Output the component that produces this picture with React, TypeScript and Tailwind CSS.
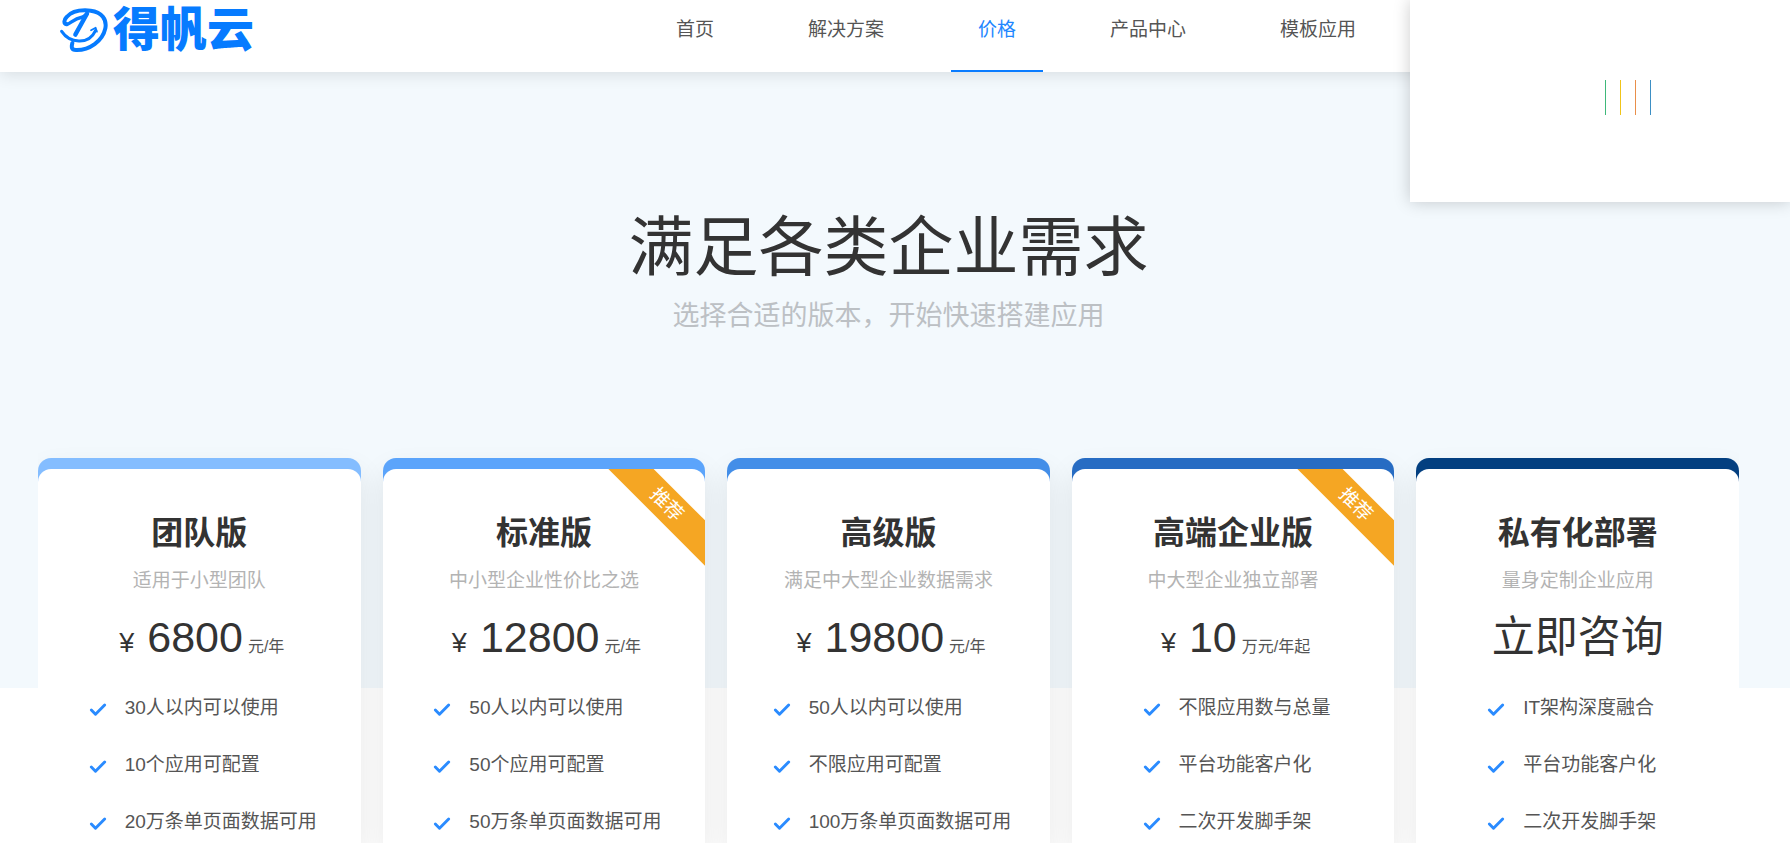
import React from "react";
import { Check } from "lucide-react";

type Plan = {
  name: string;
  desc: string;
  price?: string;
  unit?: string;
  recommended?: boolean;
  color: string;
  features: string[];
};

const navItems = ["首页", "解决方案", "价格", "产品中心", "模板应用"];

const plans: Plan[] = [
  {
    name: "团队版",
    desc: "适用于小型团队",
    price: "6800",
    unit: "元/年",
    color: "bg-[#84bdff]",
    features: ["30人以内可以使用", "10个应用可配置", "20万条单页面数据可用"],
  },
  {
    name: "标准版",
    desc: "中小型企业性价比之选",
    price: "12800",
    unit: "元/年",
    recommended: true,
    color: "bg-[#5ba4fb]",
    features: ["50人以内可以使用", "50个应用可配置", "50万条单页面数据可用"],
  },
  {
    name: "高级版",
    desc: "满足中大型企业数据需求",
    price: "19800",
    unit: "元/年",
    color: "bg-[#438ee8]",
    features: ["50人以内可以使用", "不限应用可配置", "100万条单页面数据可用"],
  },
  {
    name: "高端企业版",
    desc: "中大型企业独立部署",
    price: "10",
    unit: "万元/年起",
    recommended: true,
    color: "bg-[#276cc3]",
    features: ["不限应用数与总量", "平台功能客户化", "二次开发脚手架"],
  },
  {
    name: "私有化部署",
    desc: "量身定制企业应用",
    color: "bg-[#033f80]",
    features: ["IT架构深度融合", "平台功能客户化", "二次开发脚手架"],
  },
];

const loaderBars = [
  "bg-[#3fb87a]",
  "bg-[#f0c419]",
  "bg-[#e98f4a]",
  "bg-[#3d8fc4]",
];

function Logo() {
  return (
    <a href="#" className="flex items-center gap-[5px] text-[#067bff]">
      <svg
        width="48"
        height="46"
        viewBox="60 18 144 138"
        fill="none"
        stroke="currentColor"
        strokeLinecap="round"
        strokeLinejoin="round"
        aria-hidden="true"
      >
        <path
          d="M80 70C70 68 72 56 80 48C94 32 122 26 152 29C186 33 201 56 196 82C188 120 148 148 108 147C94 147 94 138 97 126"
          strokeWidth="12"
        />
        <path d="M80 70C92 68 98 54 128 48L142 38" strokeWidth="10" />
        <path d="M141 38L106 101" strokeWidth="13" />
        <path d="M65 91C88 126 146 134 167 88" strokeWidth="9" />
        <path d="M153 88L167 80L171 92" strokeWidth="5" />
      </svg>
      <span className="text-[47px] leading-[48px] font-black">得帆云</span>
    </a>
  );
}

function Header() {
  return (
    <header className="relative z-10 flex h-[72px] items-start bg-white pl-[60px] shadow-[0_2px_16px_rgba(0,0,0,0.12)]">
      <div className="w-[589px] shrink-0 pt-[6px]">
        <Logo />
      </div>
      <nav className="flex h-full gap-10">
        {navItems.map((item) => (
          <a
            key={item}
            href="#"
            className={
              item === "价格"
                ? "border-b-2 border-[#0a7cff] px-[27px] pt-4 text-[19px] leading-7 text-[#1f87ff]"
                : "px-[27px] pt-4 text-[19px] leading-7 text-[#555]"
            }
          >
            {item}
          </a>
        ))}
      </nav>
    </header>
  );
}

function LoadingPanel() {
  return (
    <div className="absolute top-0 right-0 z-20 flex h-[202px] w-[380px] justify-center gap-[14px] bg-white pt-20 pl-[56px] shadow-[0_0_16px_rgba(0,0,0,0.2)]">
      {loaderBars.map((bar) => (
        <span key={bar} className={`h-[35px] w-px ${bar}`} />
      ))}
    </div>
  );
}

function PlanCard({ plan }: { plan: Plan }) {
  return (
    <article
      className={`flex min-w-0 flex-1 flex-col rounded-t-[13px] pt-[11px] shadow-[0_14px_30px_rgba(0,0,0,0.09)] ${plan.color}`}
    >
      <div className="relative flex-1 overflow-hidden rounded-t-[13px] bg-white pt-11 text-center">
        {plan.recommended && (
          <span className="absolute top-[21px] right-[-43px] w-40 rotate-45 bg-[#f5a623] pr-1 text-[19px] leading-8 text-white">
            推荐
          </span>
        )}
        <h2 className="text-[32px] leading-10 font-bold text-[#333]">
          {plan.name}
        </h2>
        <p className="mt-[14px] text-[19px] leading-7 text-[#b3b3b3]">
          {plan.desc}
        </p>
        <div className="mt-3 flex h-[60px] items-baseline justify-center text-[43px] leading-[60px] text-[#333]">
          {plan.price ? (
            <>
              <span className="mr-[13px] ml-[5px] text-[27px]">¥</span>
              <span>{plan.price}</span>
              <span className="ml-[5px] text-base text-[#555]">
                {plan.unit}
              </span>
            </>
          ) : (
            <a href="#">立即咨询</a>
          )}
        </div>
        <ul className="mx-auto mt-[27px] flex w-fit min-w-[195px] flex-col gap-[30px] pl-[6px] text-left text-[19px] leading-[27px] text-[#555]">
          {plan.features.map((feature) => (
            <li key={feature} className="flex items-center gap-[17px]">
              <Check
                size={20}
                strokeWidth={3.5}
                className="mt-1 shrink-0 text-[#2a8bff]"
              />
              {feature}
            </li>
          ))}
        </ul>
      </div>
    </article>
  );
}

export default function App() {
  return (
    <div className="relative flex min-h-screen flex-col bg-white font-['Liberation_Sans','Noto_Sans_CJK_SC',sans-serif]">
      <Header />
      <LoadingPanel />
      <main className="flex flex-1 flex-col bg-[linear-gradient(#f3f9fd_616px,#fff_616px)] pt-[137px] pr-[51px] pl-[38px]">
        <h1 className="text-center text-[65px] leading-[78px] text-[#333]">
          满足各类企业需求
        </h1>
        <p className="mt-[9px] text-center text-[27px] leading-10 text-[#bcc0c4]">
          选择合适的版本，开始快速搭建应用
        </p>
        <section className="mt-[122px] flex flex-1 gap-[22px] [overflow-x:clip]">
          {plans.map((plan) => (
            <PlanCard key={plan.name} plan={plan} />
          ))}
        </section>
      </main>
    </div>
  );
}
